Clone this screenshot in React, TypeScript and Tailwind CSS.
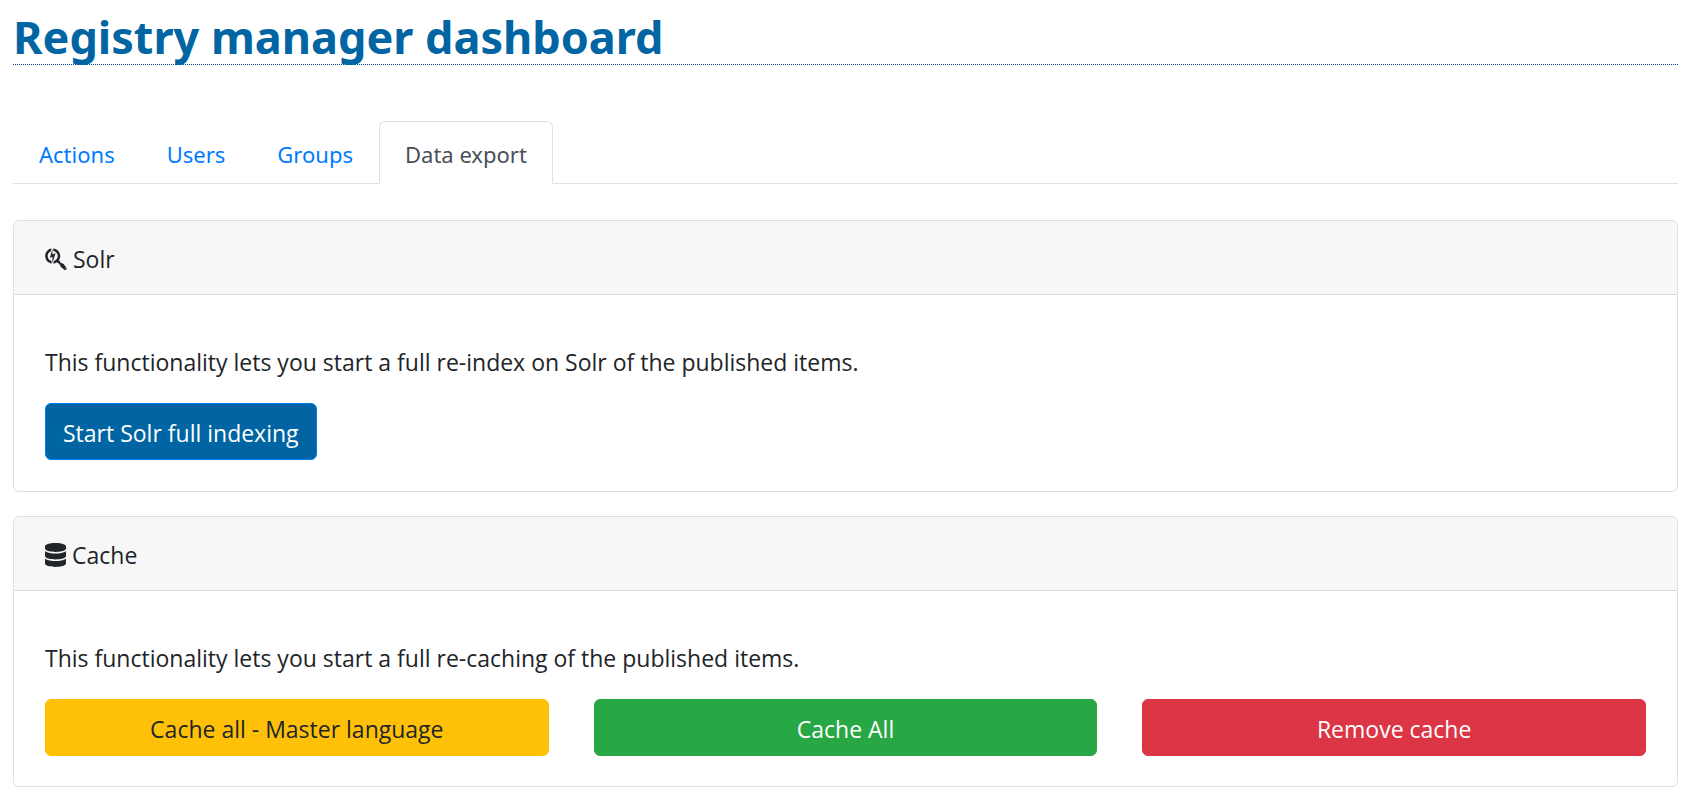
import type { ReactNode } from "react";
import { FaDatabase, FaSearchengin } from "react-icons/fa";

const tabs = ["Actions", "Users", "Groups", "Data export"];
const activeTab = "Data export";

function Card({ icon, title, children }: { icon: ReactNode; title: string; children: ReactNode }) {
  return (
    <section className="rounded-md border border-[#dfdfdf] bg-white">
      <h2 className="flex h-[74px] items-center gap-[6px] rounded-t-[5px] border-b border-[#d8d8d8] bg-[#f7f7f7] px-[31px] pt-[2px]">
        {icon}
        {title}
      </h2>
      <div className="px-[31px] pt-[49px] pb-[30px]">{children}</div>
    </section>
  );
}

const button = "h-[57px] cursor-pointer rounded-md border px-[17px] pt-[2px]";

export default function App() {
  return (
    <main className="min-h-screen bg-white pt-[9px] pr-[17px] pb-4 pl-[13px] font-['Open_Sans',sans-serif] text-[23px] leading-[36px] text-[#212529]">
      <h1 className="border-b border-dotted border-[#004494] font-['Noto_Sans',sans-serif] text-[45px] leading-[55px] font-bold text-[#0065a2]">
        Registry manager dashboard
      </h1>
      <nav className="mt-14 flex border-b border-[#dee2e6] font-['Noto_Sans',sans-serif] text-[22px]">
        {tabs.map((tab) => (
          <a
            key={tab}
            href="#"
            aria-current={tab === activeTab ? "page" : undefined}
            className={
              tab === activeTab
                ? "-mb-px h-[63px] rounded-t-md border border-[#dee2e6] border-b-white bg-white px-[25px] pt-[14px] text-[#495057]"
                : "h-[62px] border border-transparent px-[25px] pt-[14px] text-[#007bff]"
            }
          >
            {tab}
          </a>
        ))}
      </nav>
      <div className="mt-9 flex flex-col gap-6">
        <Card title="Solr" icon={<FaSearchengin className="h-6 w-[22px]" aria-hidden />}>
          <p>This functionality lets you start a full re-index on Solr of the published items.</p>
          <button type="button" className={`${button} mt-[23px] mb-px block border-[#007bff] bg-[#0065a2] text-white`}>
            Start Solr full indexing
          </button>
        </Card>
        <Card title="Cache" icon={<FaDatabase className="h-6 w-[21px]" aria-hidden />}>
          <p>This functionality lets you start a full re-caching of the published items.</p>
          <div className="mt-[23px] grid grid-cols-3 gap-[45px]">
            <button type="button" className={`${button} border-[#ffc107] bg-[#ffc107]`}>
              Cache all - Master language
            </button>
            <button type="button" className={`${button} border-[#28a745] bg-[#28a745] text-white`}>
              Cache All
            </button>
            <button type="button" className={`${button} border-[#dc3545] bg-[#dc3545] text-white`}>
              Remove cache
            </button>
          </div>
        </Card>
      </div>
    </main>
  );
}
